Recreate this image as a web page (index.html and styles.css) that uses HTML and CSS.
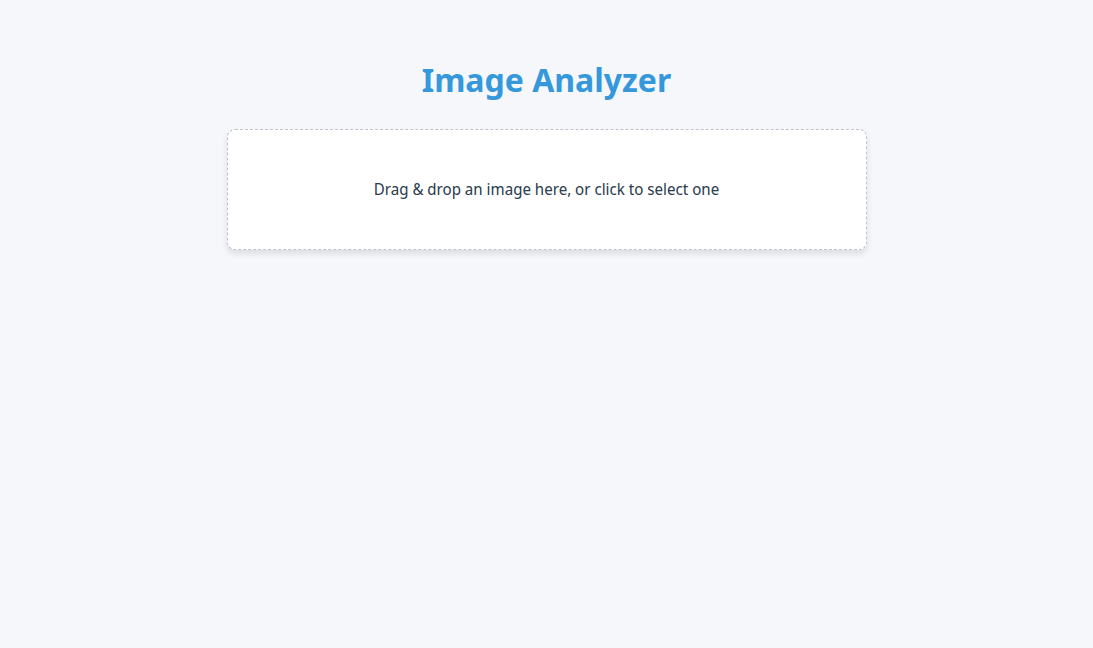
FILE: index.html
```
<!DOCTYPE html>
<html lang="en">
<head>
  <meta charset="utf-8">
  <meta name="viewport" content="width=device-width, initial-scale=1">
  <title>Image Analyzer</title>
  <link rel="stylesheet" href="styles.css">
</head>
<body>
  <main class="container">
    <h1 class="title">Image Analyzer</h1>
    <button class="drop-zone" type="button">Drag &amp; drop an image here, or click to select one</button>
  </main>
</body>
</html>
```

FILE: styles.css
```
* {
  box-sizing: border-box;
}

body {
  margin: 0;
  background: #f5f7fb;
  color: #2c3e50;
  font-family: "Noto Sans", sans-serif;
  font-size: 16px;
  line-height: 23px;
}

.container {
  max-width: 672px;
  margin: 0 auto;
  padding: 56px 16px;
}

.title {
  margin: 0 0 25px;
  color: #3498db;
  font-size: 32px;
  font-weight: 700;
  line-height: 48px;
  text-align: center;
}

.drop-zone {
  display: block;
  width: 100%;
  padding: 48px 32px;
  border: 1px dashed #bdc3c7;
  border-radius: 8px;
  background: #ffffff;
  box-shadow: 0 4px 6px rgba(0, 0, 0, 0.1);
  color: inherit;
  font: inherit;
  font-family: "Noto Sans Display", "Noto Sans", sans-serif;
  text-align: center;
  cursor: pointer;
}
```
